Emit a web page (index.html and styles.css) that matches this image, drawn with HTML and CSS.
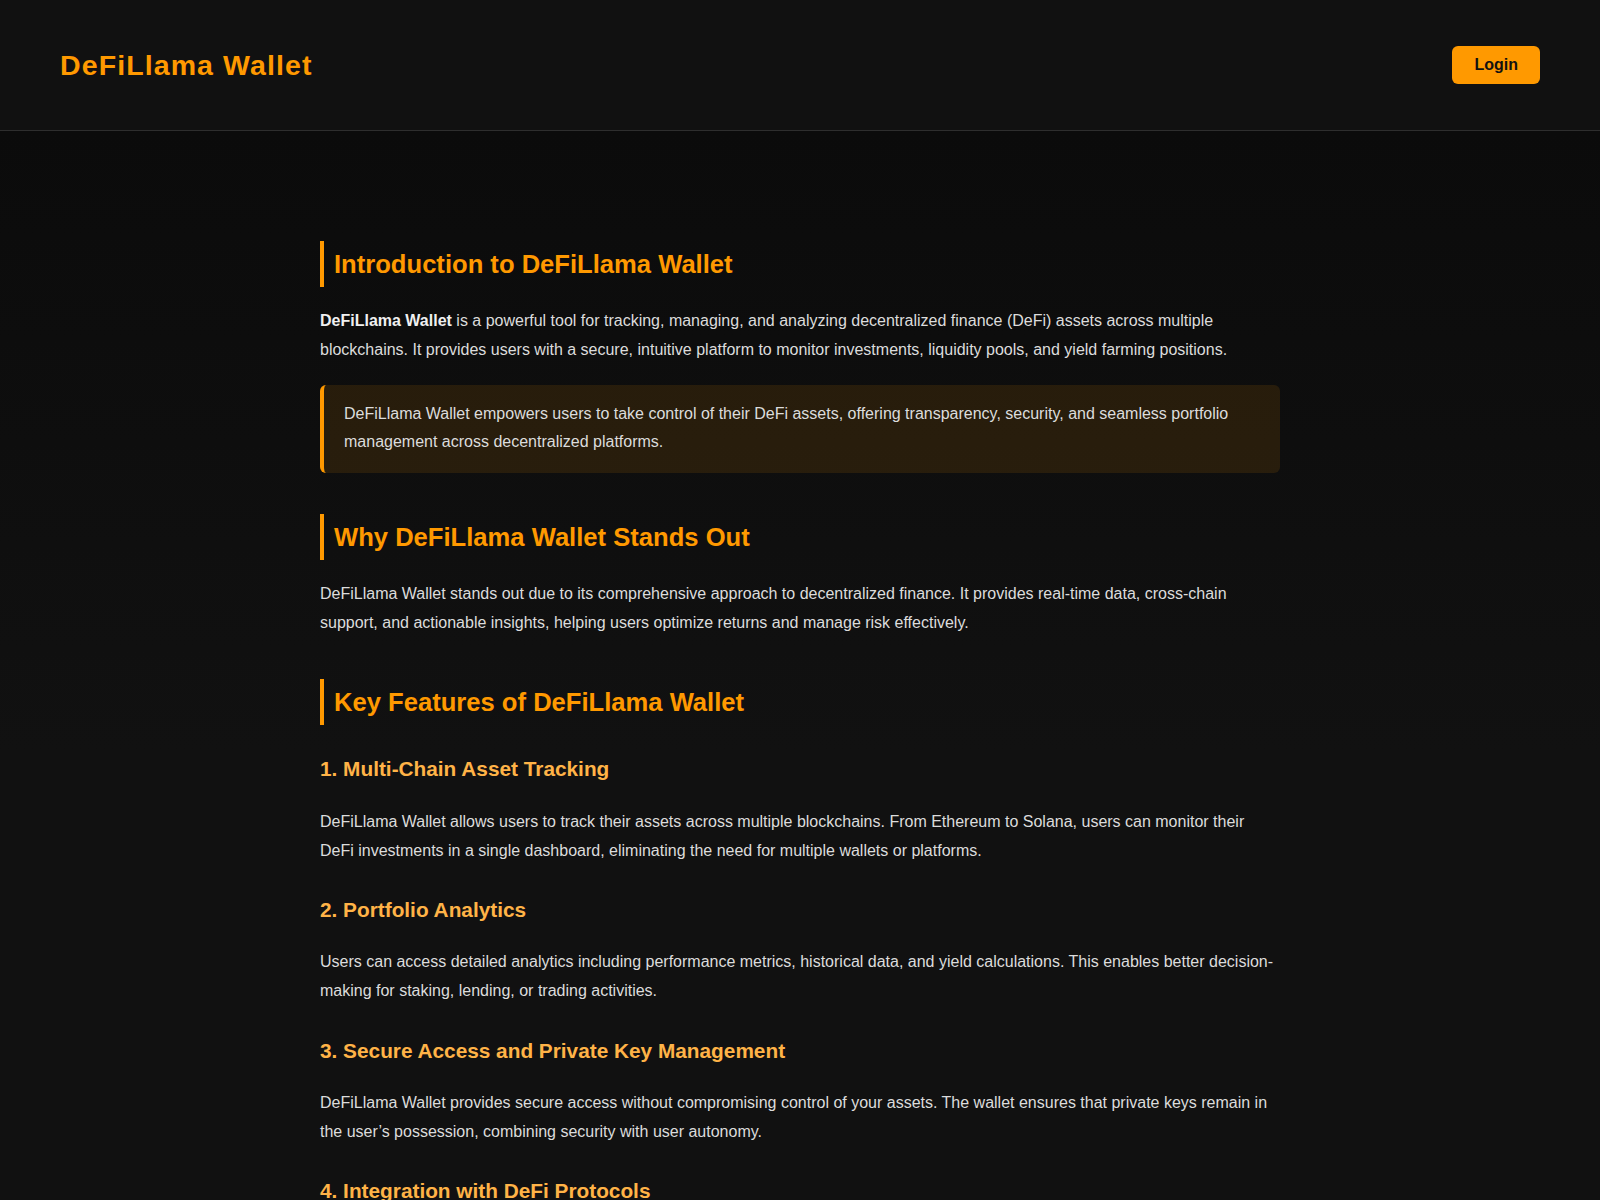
FILE: index.html
```html
<!DOCTYPE html>
<html lang="en">
<head>
<meta charset="utf-8">
<title>DeFiLlama Wallet</title>
<link rel="stylesheet" href="styles.css">
</head>
<body>
<header class="site-header">
  <div class="logo">DeFiLlama Wallet</div>
  <button class="login-btn" type="button">Login</button>
</header>
<main class="main">
  <article class="content">
    <h2 class="section-title">Introduction to DeFiLlama Wallet</h2>
    <p><strong>DeFiLlama Wallet</strong> is a powerful tool for tracking, managing, and analyzing decentralized finance (DeFi) assets across multiple blockchains. It provides users with a secure, intuitive platform to monitor investments, liquidity pools, and yield farming positions.</p>
    <div class="callout">DeFiLlama Wallet empowers users to take control of their DeFi assets, offering transparency, security, and seamless portfolio management across decentralized platforms.</div>

    <h2 class="section-title">Why DeFiLlama Wallet Stands Out</h2>
    <p>DeFiLlama Wallet stands out due to its comprehensive approach to decentralized finance. It provides real-time data, cross-chain support, and actionable insights, helping users optimize returns and manage risk effectively.</p>

    <h2 class="section-title">Key Features of DeFiLlama Wallet</h2>
    <h3 class="feature-title">1. Multi-Chain Asset Tracking</h3>
    <p>DeFiLlama Wallet allows users to track their assets across multiple blockchains. From Ethereum to Solana, users can monitor their DeFi investments in a single dashboard, eliminating the need for multiple wallets or platforms.</p>

    <h3 class="feature-title">2. Portfolio Analytics</h3>
    <p>Users can access detailed analytics including performance metrics, historical data, and yield calculations. This enables better decision-making for staking, lending, or trading activities.</p>

    <h3 class="feature-title">3. Secure Access and Private Key Management</h3>
    <p>DeFiLlama Wallet provides secure access without compromising control of your assets. The wallet ensures that private keys remain in the user’s possession, combining security with user autonomy.</p>

    <h3 class="feature-title">4. Integration with DeFi Protocols</h3>
    <p>DeFiLlama Wallet integrates with major DeFi protocols, allowing users to view lending, borrowing, staking and liquidity positions directly from the dashboard.</p>
  </article>
</main>
</body>
</html>
```

FILE: styles.css
```css
* {
  box-sizing: border-box;
}

html, body {
  margin: 0;
  padding: 0;
}

body {
  background: #111111;
  color: #dcdcdc;
  font-family: "Liberation Sans", Arial, sans-serif;
  font-size: 16px;
  line-height: 1.8;
}

.site-header {
  height: 131px;
  padding: 0 60px;
  display: flex;
  align-items: center;
  justify-content: space-between;
  background: #111111;
  border-bottom: 1px solid #2e2e2e;
}

.logo {
  color: #ff9900;
  font-size: 28.5px;
  font-weight: 700;
  letter-spacing: 1.1px;
  line-height: 1;
}

.login-btn {
  background: #ff9900;
  color: #111111;
  border: none;
  border-radius: 6px;
  padding: 10px 22px;
  font-family: "Liberation Sans", Arial, sans-serif;
  font-size: 16px;
  font-weight: 700;
  line-height: 18px;
  cursor: pointer;
}

.main {
  background: linear-gradient(to bottom, #0b0b0b 0px, #111111 620px);
  padding: 70px 0 60px;
}

.content {
  max-width: 960px;
  margin: 0 auto;
}

.section-title {
  color: #ff9900;
  font-size: 25.6px;
  font-weight: 700;
  line-height: 1.8;
  margin: 41px 0 20px;
  padding-left: 10px;
  border-left: 4px solid #ff9900;
}

.content > .section-title:first-child {
  margin-top: 40px;
}

.feature-title {
  color: #ffb347;
  font-size: 20.8px;
  font-weight: 700;
  line-height: 1.8;
  margin: 25.5px 0 20px;
}

p {
  margin: 0 0 20px;
}

strong {
  color: #f0f0f0;
  font-weight: 700;
}

.callout {
  background: #28190e;
  background: rgba(255, 153, 0, 0.11);
  border-left: 4px solid #ff9900;
  border-radius: 6px;
  padding: 15px 20px 16px;
  margin: 0 0 20px;
  color: #dcdcdc;
}
```
